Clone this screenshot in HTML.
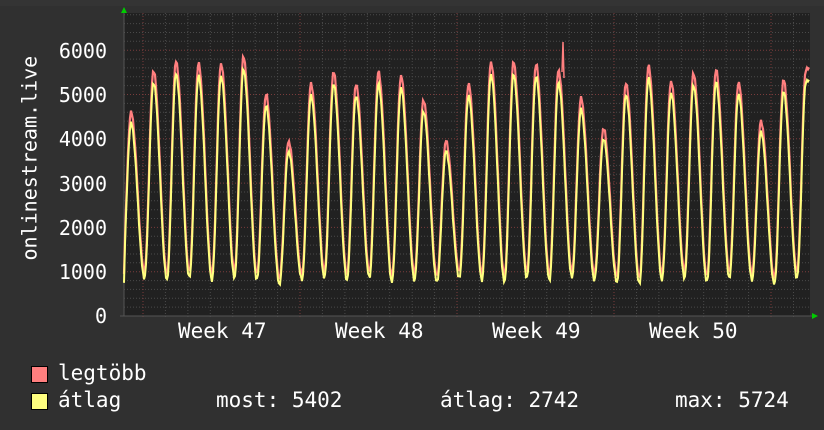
<!DOCTYPE html>
<html><head><meta charset="utf-8">
<style>
html,body{margin:0;padding:0;background:#303030;}
#w{position:relative;width:824px;height:430px;overflow:hidden;background:#303030;font-family:"DejaVu Sans Mono","Liberation Mono",monospace;color:#fff;}
.t{position:absolute;font-size:21px;line-height:21px;white-space:pre;color:#fff;}
.yl{position:absolute;right:717px;font-size:20px;line-height:20px;}
.sq{position:absolute;width:15px;height:15px;border:1px solid #000;}
</style></head><body>
<div id="w">
<svg id="g" width="824" height="430" style="position:absolute;left:0;top:0"></svg>
<div class="t" style="left:-70px;top:150px;transform:rotate(-90deg);width:200px;text-align:center;font-size:20px">onlinestream.live</div>
<div class="t yl" style="top:41px">6000</div>
<div class="t yl" style="top:85px">5000</div>
<div class="t yl" style="top:129px">4000</div>
<div class="t yl" style="top:174px">3000</div>
<div class="t yl" style="top:218px">2000</div>
<div class="t yl" style="top:262px">1000</div>
<div class="t yl" style="top:306px">0</div>
<div class="t" style="left:178px;top:321px">Week 47</div>
<div class="t" style="left:335px;top:321px">Week 48</div>
<div class="t" style="left:492px;top:321px">Week 49</div>
<div class="t" style="left:649px;top:321px">Week 50</div>
<div class="sq" style="left:31px;top:366px;background:#ff7f7f"></div>
<div class="sq" style="left:31px;top:393px;background:#ffff7f"></div>
<div class="t" style="left:58px;top:363px">legtöbb</div>
<div class="t" style="left:58px;top:390px">átlag</div>
<div class="t" style="left:216px;top:390px">most: 5402</div>
<div class="t" style="left:440px;top:390px">átlag: 2742</div>
<div class="t" style="left:675px;top:390px">max: 5724</div>
</div>
<script>
var s='';
s+='<rect x="0" y="0" width="824" height="6" fill="#343434"/>';
s+='<rect x="124" y="13" width="686" height="303" fill="#212121"/>';
var X0=124,X1=810,Y0=316,Y1=13,k=44.3;
for(var i=1;i*8.86<=303;i++){var y=Y0-i*8.86;var red=(i%5==0);
s+='<line x1="'+X0+'" y1="'+y.toFixed(1)+'" x2="'+X1+'" y2="'+y.toFixed(1)+'" stroke="'+(red?'#7a3c3c':'#4a4a4a')+'" stroke-dasharray="1,2"/>';}
for(var x=143;x<X1;x+=22.43){var wk=Math.abs(((x-143)/157.0)-Math.round((x-143)/157.0))<0.05;
s+='<line x1="'+x.toFixed(1)+'" y1="'+Y1+'" x2="'+x.toFixed(1)+'" y2="'+(Y0+3)+'" stroke="'+(wk?'#7a3c3c':'#4a4a4a')+'" stroke-dasharray="1,2"/>';}
s+='<line x1="124" y1="13" x2="124" y2="316" stroke="#555"/>';
s+='<line x1="120" y1="316" x2="812" y2="316" stroke="#555"/>';
s+='<polygon points="121,13 127,13 124,7" fill="#0c0"/>';
s+='<polygon points="812,313 812,319 818,316" fill="#0c0"/>';
var P=[4600,5550,5750,5700,5700,5850,5000,3950,5240,5510,5240,5510,5420,4880,3950,5240,5730,5730,5690,5550,4920,4240,5260,5640,5300,5480,5550,5280,4400,5330,5580];
var TR=[900,1000,950,1000,950,1000,950,850,950,1000,950,1000,900,950,900,1000,950,900,1000,950,1000,950,900,850,950,1000,900,1000,950,850,1000];
function val(x,yel){
 for(var i=0;i<P.length;i++){
  var p=131+i*22.5;var t=p-9;
  if(x<=p){
   var tv=TR[i];
   if(x<t){var pv=i>0?P[i-1]:1500; var pp=p-22.5; var g=(x-pp)/13.5; g=Math.min(1,Math.max(0,g));
     return adj(tv+(pv-tv)*(0.5+0.5*Math.cos(Math.PI*g)),yel,x);}
   var f=(x-t)/9;
   return adj(tv+(P[i]-tv)*(0.5-0.5*Math.cos(Math.PI*Math.min(1,f))),yel,x);}
 }
 return adj(P[P.length-1],yel,x);
}
function adj(v,yel,x){var n=Math.sin(x*3.7)*30+Math.sin(x*1.3)*20; v+=n; if(yel){v=v*0.97-110;} return v;}
function path(yel){var d='';for(var x=124;x<=809;x+=1){var v=val(x,yel);if(x==124)v=yel?750:950;var y=Y0-v/1000*k;d+=(x==124?'M':'L')+x+','+y.toFixed(1);}return d;}
s+='<path d="'+path(false)+'" fill="none" stroke="#ff7f7f" stroke-width="2.2"/>';
s+='<path d="'+path(true)+'" fill="none" stroke="#ffff7f" stroke-width="2"/>';
s+='<path d="M562,72 L563,42 L564,78" fill="none" stroke="#ff7f7f" stroke-width="1.5"/>';
document.getElementById('g').innerHTML=s;
</script>
</body></html>
